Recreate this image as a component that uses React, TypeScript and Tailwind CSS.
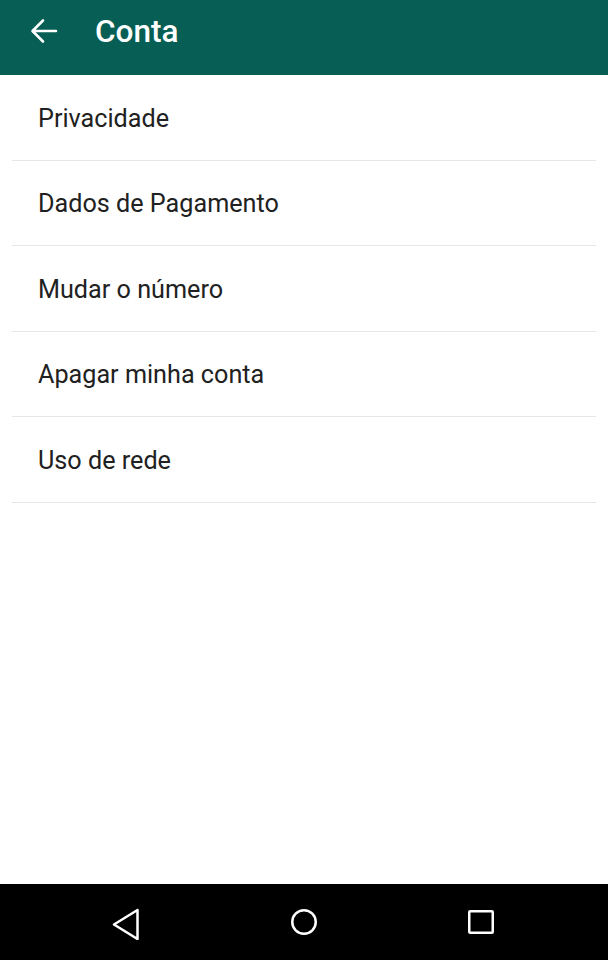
const items = ['Privacidade', 'Dados de Pagamento', 'Mudar o número', 'Apagar minha conta', 'Uso de rede'];

export default function App() {
  return (
    <div className="flex h-[960px] w-[608px] flex-col bg-white" style={{ fontFamily: 'Roboto, sans-serif' }}>
      <header className="flex h-[75px] shrink-0 items-center bg-[#075e54] pb-[14px] text-white">
        <svg className="ml-[30px] h-[28px] w-[28px]" viewBox="0 0 28 28" fill="none" stroke="currentColor" strokeWidth="2.6" strokeLinecap="round" strokeLinejoin="round">
          <path d="M26 14H3M13 3.5L2.5 14 13 24.5" />
        </svg>
        <h1 className="ml-[37px] mt-[2px] text-[31.5px] font-medium leading-none">Conta</h1>
      </header>

      <ul className="flex-1 px-[12px]">
        {items.map((item) => (
          <li key={item} className="flex h-[85.5px] items-center border-b border-[#e6e6e6] pl-[26px] pt-[3px] text-[25.2px] text-[#212121]">
            {item}
          </li>
        ))}
      </ul>

      <nav className="flex h-[76px] shrink-0 items-center bg-black">
        <svg className="ml-[110px] h-[36px] w-[32px]" viewBox="0 0 32 36" fill="none" stroke="white" strokeWidth="2.5" strokeLinejoin="round">
          <path d="M27.5 6L4 20.5 27.5 35z" />
        </svg>
        <svg className="ml-[146px] h-[32px] w-[32px]" viewBox="0 0 32 32" fill="none" stroke="white" strokeWidth="2.5">
          <circle cx="16" cy="16" r="11.75" />
        </svg>
        <svg className="ml-[145px] h-[32px] w-[32px]" viewBox="0 0 32 32" fill="none" stroke="white" strokeWidth="2.5">
          <rect x="4.25" y="5.25" width="23.5" height="21.5" rx="1" />
        </svg>
      </nav>
    </div>
  );
}
